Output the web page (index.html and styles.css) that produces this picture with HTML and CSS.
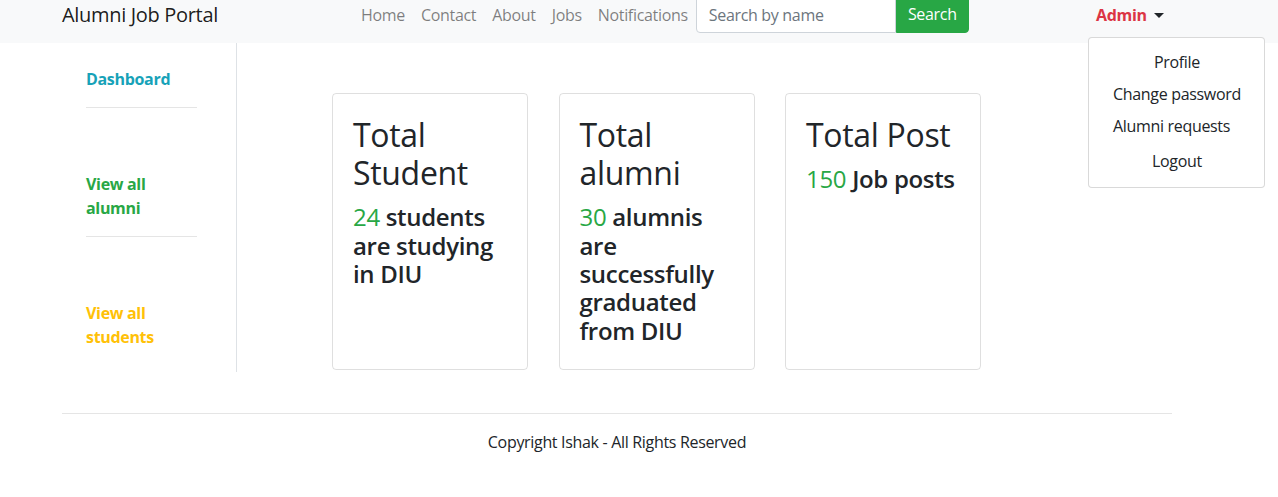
FILE: index.html
```html
<!DOCTYPE html>
<html lang="en">
<head>
<meta charset="utf-8">
<title>Alumni Job Portal</title>
<link rel="stylesheet" href="styles.css">
</head>
<body>
<nav class="navbar">
  <div class="nav-row">
    <div class="nav-main">
      <a class="brand" href="#">Alumni Job Portal</a>
      <ul class="nav-links">
        <li><a class="nav-link" href="#">Home</a></li>
        <li><a class="nav-link" href="#">Contact</a></li>
        <li><a class="nav-link" href="#">About</a></li>
        <li><a class="nav-link" href="#">Jobs</a></li>
        <li><a class="nav-link" href="#">Notifications</a></li>
      </ul>
      <form class="search-form">
        <input class="search-input" type="text" placeholder="Search by name">
        <button class="search-btn" type="button">Search</button>
      </form>
    </div>
    <div class="dropdown">
      <a class="admin-link" href="#">Admin<span class="caret"></span></a>
      <div class="dropdown-menu">
        <a class="dd-item center" href="#">Profile</a>
        <a class="dd-item" href="#">Change password</a>
        <a class="dd-item" href="#">Alumni requests</a>
        <a class="dd-item center logout" href="#">Logout</a>
      </div>
    </div>
  </div>
</nav>

<div class="content-row">
  <aside class="sidebar">
    <a class="side-link info" href="#">Dashboard</a>
    <hr class="side-hr">
    <a class="side-link success" href="#">View all alumni</a>
    <hr class="side-hr">
    <a class="side-link warning" href="#">View all students</a>
  </aside>
  <main class="main">
    <div class="card">
      <h2 class="card-title">Total Student</h2>
      <h4 class="card-text"><span class="num">24</span> <span class="rest">students are studying in DIU</span></h4>
    </div>
    <div class="card">
      <h2 class="card-title">Total alumni</h2>
      <h4 class="card-text"><span class="num">30</span> <span class="rest">alumnis are successfully graduated from DIU</span></h4>
    </div>
    <div class="card">
      <h2 class="card-title">Total Post</h2>
      <h4 class="card-text"><span class="num">150</span> <span class="rest">Job posts</span></h4>
    </div>
  </main>
</div>

<footer class="footer">
  <hr class="footer-hr">
  <p class="copyright">Copyright Ishak - All Rights Reserved</p>
</footer>
</body>
</html>
```

FILE: styles.css
```css
* { box-sizing: border-box; }

body {
  margin: 0;
  font-family: "Open Sans", "Noto Sans", "DejaVu Sans", sans-serif;
  font-size: 16px;
  line-height: 1.5;
  letter-spacing: -0.02em;
  color: #212529;
  background: #fff;
}

a { text-decoration: none; }

.navbar {
  height: 43px;
  background: #f8f9fa;
  padding-left: 62px;
}

.nav-row {
  display: flex;
  align-items: flex-start;
  height: 38px;
  position: relative;
  top: -5px;
}

.nav-main {
  flex: 0 0 1026px;
  display: flex;
  align-items: center;
  height: 38px;
}

.brand {
  flex: 0 0 291px;
  font-size: 20px;
  line-height: 30px;
  padding-top: 2px;
  color: rgba(0, 0, 0, .9);
}

.nav-links {
  list-style: none;
  margin: 0;
  padding: 0;
  display: flex;
}

.nav-link {
  display: block;
  padding: 8px 8px 6px;
  color: rgba(0, 0, 0, .5);
}

.search-form {
  display: flex;
}

.search-input {
  width: 200px;
  height: 38px;
  padding: 7px 12px 5px;
  border: 1px solid #ced4da;
  border-radius: 4px 0 0 4px;
  font: inherit;
  letter-spacing: -0.02em;
  color: #495057;
  background: #fff;
}

.search-input::placeholder { color: #6c757d; }

.search-btn {
  width: 73px;
  height: 38px;
  border: 1px solid #28a745;
  border-radius: 0 4px 4px 0;
  background: #28a745;
  color: #fff;
  font: inherit;
  letter-spacing: -0.02em;
  padding: 5px 6px 5px;
}

.dropdown {
  position: relative;
}

.admin-link {
  display: flex;
  align-items: center;
  padding: 8px 8px 6px;
  font-weight: 700;
  color: #dc3545;
}

.caret {
  display: inline-block;
  margin-left: 7px;
  border-top: 5px solid #212529;
  border-left: 5px solid transparent;
  border-right: 5px solid transparent;
}

.dropdown-menu {
  position: absolute;
  left: 0;
  top: 42px;
  width: max-content;
  padding: 8px 0;
  background: #fff;
  border: 1px solid rgba(0, 0, 0, .15);
  border-radius: 4px;
  display: flex;
  flex-direction: column;
}

.dd-item {
  display: block;
  padding: 4px 23px 4px 24px;
  color: #212529;
}

.dd-item.center { text-align: center; }
.dd-item.logout { padding: 6.5px 23px 6.5px 24px; }

.content-row {
  display: flex;
  align-items: stretch;
}

.sidebar {
  flex: 0 0 237px;
  border-right: 1px solid #dee2e6;
  padding: 24px 0 23px 86px;
  display: flex;
  flex-direction: column;
  min-height: 329px;
}

.side-link {
  width: 111px;
  font-weight: 700;
  line-height: 24px;
}

.side-link.info { color: #17a2b8; }
.side-link.success { color: #28a745; }
.side-link.warning { color: #ffc107; }

.side-hr {
  width: 111px;
  margin: 16px 0 64px;
  border: 0;
  border-top: 1px solid rgba(0, 0, 0, .1);
}

.main {
  flex: 1;
  display: flex;
  align-items: stretch;
  gap: 30.5px;
  padding: 50px 0 2px 95px;
}

.card {
  flex: 0 0 196px;
  border: 1px solid rgba(0, 0, 0, .125);
  border-radius: 4px;
  padding: 21.5px 20px 19.5px;
}

.card-title {
  margin: 0 0 11px;
  font-size: 32px;
  font-weight: 500;
  line-height: 1.2;
}

.card-text {
  margin: 0 0 5px;
  font-size: 24px;
  font-weight: 600;
  line-height: 1.18;
}

.num {
  color: #28a745;
  font-weight: 500;
}

.footer {
  padding: 0 106px 0 62px;
}

.footer-hr {
  margin: 41px 0 16px;
  border: 0;
  border-top: 1px solid rgba(0, 0, 0, .1);
}

.copyright {
  margin: 0;
  text-align: center;
}
```
